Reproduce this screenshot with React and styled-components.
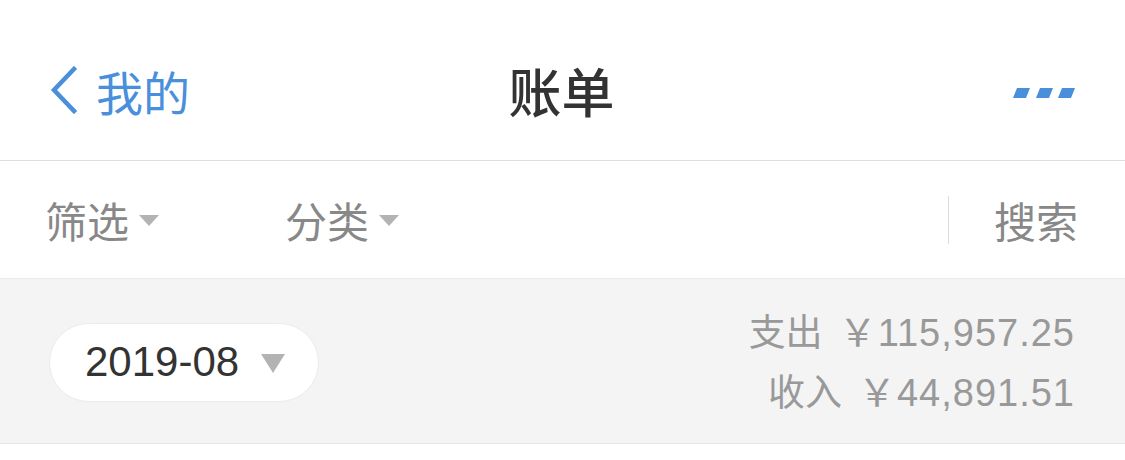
import React from 'react'
import styled, { createGlobalStyle } from 'styled-components'

const GlobalStyle = createGlobalStyle`
  html, body {
    margin: 0;
    padding: 0;
    background: #fff;
    font-family: "Liberation Sans", "Noto Sans CJK SC", sans-serif;
  }
`

const Page = styled.div`
  width: 1125px;
  height: 460px;
  overflow: hidden;
  background: #fff;
`

const NavBar = styled.header`
  height: 140px;
  display: grid;
  grid-template-columns: 1fr auto 1fr;
  align-items: center;
  padding: 20px 50px 0 48px;
  border-bottom: 1px solid #dedede;
`

const BackLink = styled.div`
  display: flex;
  align-items: center;
  gap: 18px;
  color: #4a8fdb;
  font-size: 47px;
  font-family: "Noto Sans CJK SC", sans-serif;
`

const Title = styled.h1`
  margin: 0;
  font-size: 53px;
  font-weight: 500;
  color: #333;
  font-family: "Noto Sans CJK SC", sans-serif;
`

const MoreButton = styled.div`
  justify-self: end;
  display: flex;
  margin-top: 6px;
`

const FilterBar = styled.nav`
  height: 117px;
  display: flex;
  align-items: center;
  padding: 0 47px 0 45px;
  border-bottom: 1px solid #ececec;
`

const FilterItem = styled.div`
  display: flex;
  align-items: center;
  gap: 10px;
  width: ${p => p.$width || 'auto'};
  color: #888;
  font-size: 42px;
  font-family: "Noto Sans CJK SC", sans-serif;
`

const Caret = styled.span`
  width: 0;
  height: 0;
  border-left: ${p => p.$size}px solid transparent;
  border-right: ${p => p.$size}px solid transparent;
  border-top: ${p => p.$height}px solid #b3b3b3;
  margin-top: ${p => p.$offset || 0}px;
`

const Spacer = styled.div`
  flex: 1;
`

const Divider = styled.div`
  width: 1px;
  height: 48px;
  background: #dcdcdc;
  margin-right: 45px;
  margin-left: 3px;
`

const Summary = styled.section`
  height: 164px;
  background: #f4f4f4;
  border-bottom: 1px solid #e6e6e6;
  display: flex;
  align-items: center;
  justify-content: space-between;
  padding: 0 50px 0 49px;
`

const MonthPill = styled.div`
  height: 79px;
  width: 270px;
  box-sizing: border-box;
  border: 1px solid #ebebeb;
  border-radius: 40px;
  background: #fff;
  display: flex;
  align-items: center;
  padding-left: 35px;
  gap: 22px;
  font-size: 42px;
  color: #333;
  margin-top: 2px;
`

const Totals = styled.div`
  display: flex;
  flex-direction: column;
  align-items: flex-end;
  gap: 4px;
  color: #999;
  font-size: 38px;
  line-height: 53px;
  margin-top: 2px;
`

const TotalRow = styled.div`
  display: flex;
  align-items: baseline;
`

const TotalLabel = styled.span`
  font-family: "Noto Sans CJK SC", sans-serif;
  font-size: 37px;
  margin-right: 16px;
`

const Amount = styled.span`
  letter-spacing: 1px;
`

function Chevron() {
  return (
    <svg width="30" height="48" viewBox="0 0 30 48">
      <path d="M26 3 L6 24 L26 45" fill="none" stroke="#4a8fdb" strokeWidth="4.5" strokeLinecap="square" />
    </svg>
  )
}

function Dots() {
  return (
    <svg width="62" height="10" viewBox="0 0 62 10">
      {[0, 23, 45].map(x => (
        <polygon key={x} points={`${x + 4},0 ${x + 17},0 ${x + 13},10 ${x},10`} fill="#4a8fdb" />
      ))}
    </svg>
  )
}

export default function App() {
  return (
    <Page>
      <GlobalStyle />
      <NavBar>
        <BackLink>
          <Chevron />
          <span>我的</span>
        </BackLink>
        <Title>账单</Title>
        <MoreButton>
          <Dots />
        </MoreButton>
      </NavBar>

      <FilterBar>
        <FilterItem $width="240px">
          筛选 <Caret $size={10} $height={11} $offset={2} />
        </FilterItem>
        <FilterItem>
          分类 <Caret $size={10} $height={11} $offset={2} />
        </FilterItem>
        <Spacer />
        <Divider />
        <FilterItem>搜索</FilterItem>
      </FilterBar>

      <Summary>
        <MonthPill>
          <span>2019-08</span>
          <Caret $size={12} $height={19} $offset={2} />
        </MonthPill>
        <Totals>
          <TotalRow>
            <TotalLabel>支出</TotalLabel>
            <Amount>￥115,957.25</Amount>
          </TotalRow>
          <TotalRow>
            <TotalLabel>收入</TotalLabel>
            <Amount>￥44,891.51</Amount>
          </TotalRow>
        </Totals>
      </Summary>
    </Page>
  )
}
